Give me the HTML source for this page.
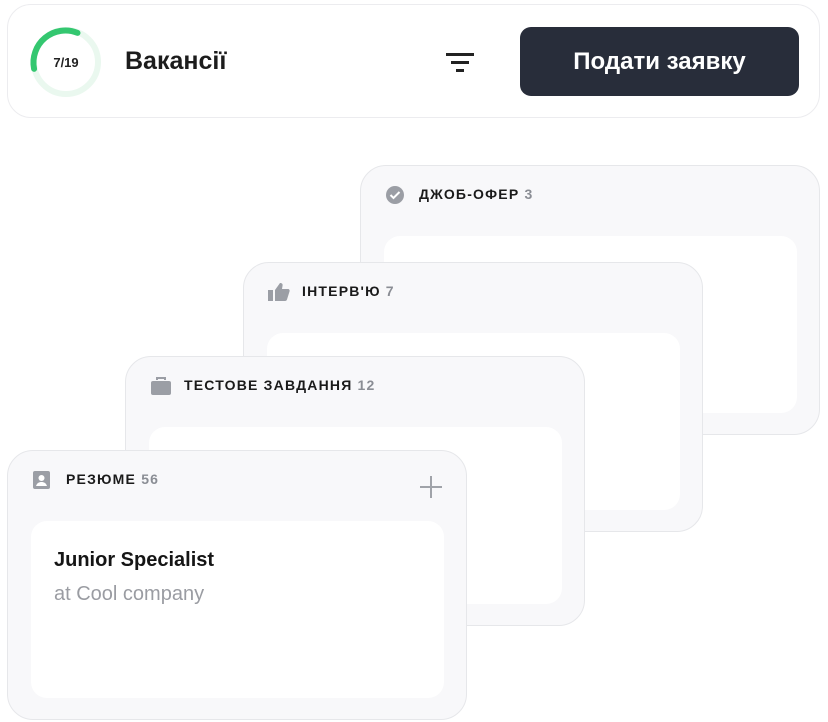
<!DOCTYPE html>
<html><head><meta charset="utf-8"><style>
body{margin:0;width:828px;height:722px;background:#fff;font-family:"Liberation Sans",sans-serif;position:relative;overflow:hidden}
.hdr{position:absolute;left:7px;top:4px;width:813px;height:114px;border:1.5px solid #ececef;border-radius:24px;box-sizing:border-box;background:#fff}
.btn{position:absolute;left:520px;top:27px;width:279px;height:69px;background:#282d3a;border-radius:11px;color:#fff;font-weight:bold;font-size:24px;line-height:69px;text-align:center}
.card{position:absolute;width:460px;height:270px;background:#f8f8fa;border:1.5px solid #e6e7ea;border-radius:26px;box-sizing:border-box}
.inner{position:absolute;left:23px;top:70px;width:413px;height:177px;background:#fff;border-radius:16px}
.lab{position:absolute;top:20px;left:58px;font-weight:bold;font-size:14px;letter-spacing:1.2px;color:#1a1a1a}
.lab span{color:#8a8d94}
.ic{position:absolute;left:24px;top:19px}
</style></head><body>
<div class="hdr"></div>
<svg style="position:absolute;left:28px;top:24px" width="76" height="76" viewBox="0 0 76 76">
<circle cx="38" cy="38" r="32" fill="none" stroke="#eaf8ef" stroke-width="6"/>
<path d="M5.6 42 A32 32 0 0 1 52 10" fill="none" stroke="#34c770" stroke-width="6" stroke-linecap="round" transform="rotate(-5 38 38)"/>
<text x="38" y="43" text-anchor="middle" font-family="Liberation Sans" font-weight="bold" font-size="13" fill="#222">7/19</text>
</svg>
<div style="position:absolute;left:125px;top:47px;font-size:25px;font-weight:bold;color:#1c1c1c">Вакансії</div>
<svg style="position:absolute;left:446px;top:51px" width="28" height="22"><rect x="0" y="2" width="28" height="3" fill="#222"/><rect x="5" y="10" width="18" height="3" fill="#222"/><rect x="10" y="18" width="8" height="3" fill="#222"/></svg>
<div class="btn">Подати заявку</div>

<div class="card" style="left:360px;top:165px"><div class="inner"></div>
<svg class="ic" width="20" height="20"><circle cx="10" cy="10" r="9" fill="#9b9ea5"/><path d="M5.5 10l3 3 6-6" stroke="#fff" stroke-width="2" fill="none"/></svg>
<div class="lab">ДЖОБ-ОФЕР <span>3</span></div></div>

<div class="card" style="left:243px;top:262px"><div class="inner"></div>
<svg class="ic" width="22" height="20"><rect x="0" y="8" width="5" height="11" fill="#9b9ea5"/><path d="M7 8l5-7c2 0 3 1 2.5 3L14 7h6c1 0 2 1 1.5 2.5l-2.5 8c-.3 1-1 1.5-2 1.5H7z" fill="#9b9ea5"/></svg>
<div class="lab">ІНТЕРВ'Ю <span>7</span></div></div>

<div class="card" style="left:125px;top:356px"><div class="inner"></div>
<svg class="ic" width="22" height="20"><path d="M7 4V2h8v2" stroke="#9b9ea5" stroke-width="2" fill="none"/><rect x="1" y="5" width="20" height="14" rx="2" fill="#9b9ea5"/></svg>
<div class="lab">ТЕСТОВЕ ЗАВДАННЯ <span>12</span></div></div>

<div class="card" style="left:7px;top:450px"><div class="inner">
<div style="position:absolute;left:23px;top:28px;font-weight:bold;font-size:20px;color:#151515">Junior Specialist</div>
<div style="position:absolute;left:23px;top:62px;font-size:20px;color:#9a9ca2">at Cool company</div></div>
<svg class="ic" width="20" height="20"><rect x="1" y="1" width="17" height="18" rx="2" fill="#9b9ea5"/><circle cx="9.5" cy="8" r="3" fill="#fff"/><path d="M4 16c1-3 3-4 5.5-4s4.5 1 5.5 4z" fill="#fff"/></svg>
<div class="lab">РЕЗЮМЕ <span>56</span></div>
<svg style="position:absolute;left:412px;top:25px" width="22" height="22"><path d="M11 0v22M0 11h22" stroke="#a0a3a9" stroke-width="2"/></svg>
</div>
</body></html>
